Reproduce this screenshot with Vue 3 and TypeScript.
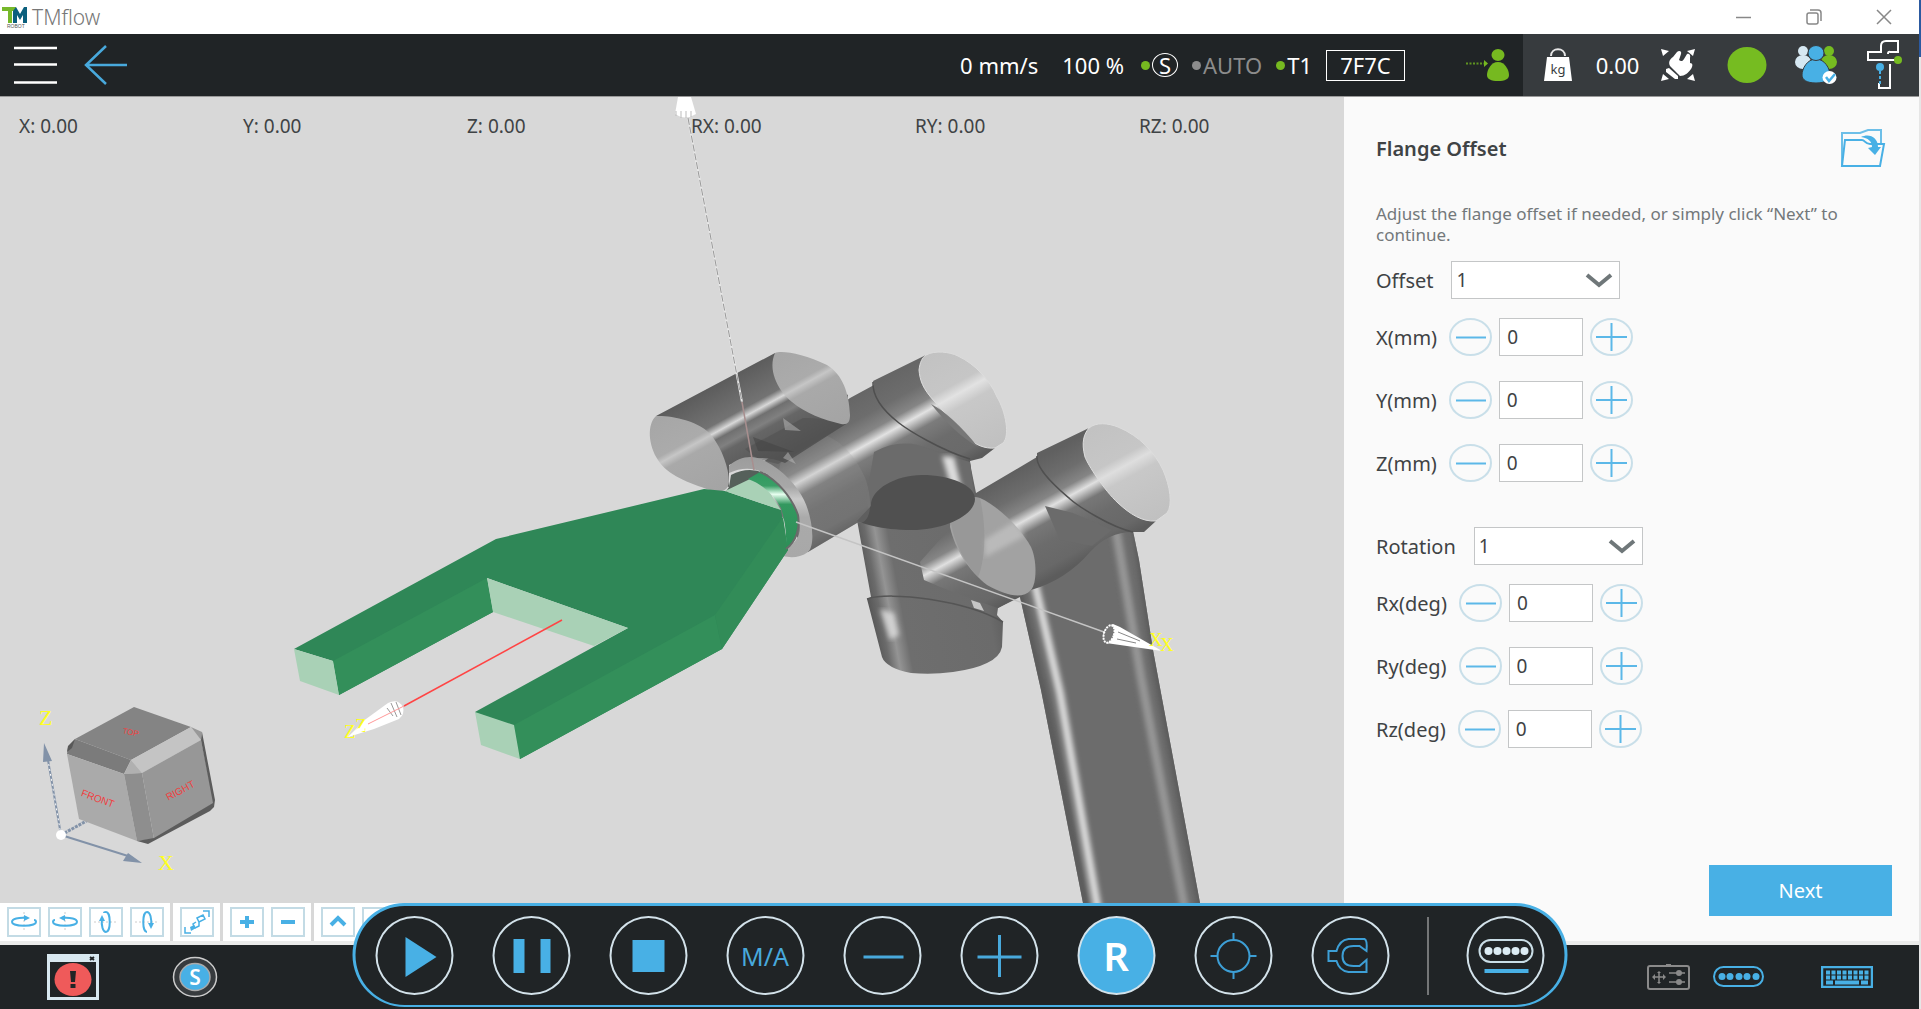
<script setup lang="ts">
import { reactive, ref } from 'vue'

interface Axis {
  id: string
  label: string
  value: string
}

const pose = ['X: 0.00', 'Y: 0.00', 'Z: 0.00', 'RX: 0.00', 'RY: 0.00', 'RZ: 0.00']

const offsetStep = ref('1')
const rotationStep = ref('1')

const offsets = reactive<Axis[]>([
  { id: 'x', label: 'X(mm)', value: '0' },
  { id: 'y', label: 'Y(mm)', value: '0' },
  { id: 'z', label: 'Z(mm)', value: '0' },
])

const rotations = reactive<Axis[]>([
  { id: 'rx', label: 'Rx(deg)', value: '0' },
  { id: 'ry', label: 'Ry(deg)', value: '0' },
  { id: 'rz', label: 'Rz(deg)', value: '0' },
])

function step(axis: Axis, amount: number) {
  axis.value = String(Number(axis.value) + amount)
}
</script>

<template>
  <div class="desktop">
    <div class="app">
      <header class="titlebar">
        <svg class="logo" width="26" height="22" viewBox="0 0 26 22" aria-hidden="true">
          <path d="M0 1h14v4h-4v12H6V5H0z" fill="#76b82a" />
          <path d="M11 17V5l3-4 4 7 4-7h3v16h-4V9l-3 5-3-5v8z" fill="#0b5f7d" />
          <text x="5" y="22" class="logo-sub">ROBOT</text>
        </svg>
        <span class="title">TMflow</span>
        <div class="window-buttons">
          <button type="button" aria-label="Minimize">
            <svg width="16" height="16" viewBox="0 0 16 16"><path d="M0 8.500h15" /></svg>
          </button>
          <button type="button" aria-label="Restore">
            <svg width="16" height="16" viewBox="0 0 16 16"><rect x="1" y="4" width="11" height="11" rx="2" /><path d="M4 1h8a3 3 0 0 1 3 3v8" /></svg>
          </button>
          <button type="button" aria-label="Close">
            <svg width="16" height="16" viewBox="0 0 16 16"><path d="M1 1l14 14M15 1L1 15" /></svg>
          </button>
        </div>
      </header>

      <nav class="topbar">
        <button type="button" class="plain menu" aria-label="Menu">
          <svg width="44" height="40" viewBox="0 0 44 40"><path d="M0 3h43M0 19.500h43M0 37.500h43" stroke="#fff" stroke-width="2.500" /></svg>
        </button>
        <button type="button" class="plain back" aria-label="Back">
          <svg width="44" height="42" viewBox="0 0 44 42"><path d="M43 21H2M22 2L2 21l20 19" fill="none" stroke="#48a9dc" stroke-width="2.500" /></svg>
        </button>
        <div class="status">
          <span class="speed">0 mm/s</span>
          <span class="percent">100 %</span>
          <span class="flag"><i class="dot on"></i><span class="ring-s">S</span></span>
          <span class="flag off"><i class="dot"></i>AUTO</span>
          <span class="flag"><i class="dot on"></i>T1</span>
          <span class="code">7F7C</span>
        </div>
        <svg class="person" width="44" height="34" viewBox="0 0 44 34">
          <path d="M0 15.500h18" stroke="#5f9420" stroke-width="2" stroke-dasharray="2 1.500" />
          <path d="M18 12l4 3.500-4 3.500z" fill="#76b920" />
          <ellipse cx="32" cy="7" rx="6.500" ry="6" fill="#76b920" />
          <path d="M32 14c7 0 11 8 11 13 0 4-4 6-11 6s-11-2-11-6c0-5 4-13 11-13z" fill="#76b920" />
        </svg>
        <div class="tray">
          <span class="cell kg">
            <svg width="30" height="36" viewBox="0 0 30 36">
              <path d="M8 9c0-9 14-9 14 0" fill="none" stroke="#e8e8e8" stroke-width="2" />
              <path d="M4 10h22l3 24H1z" fill="#fff" />
              <text x="15" y="27" text-anchor="middle" class="kg-text">kg</text>
            </svg>
          </span>
          <span class="cell payload">0.00</span>
          <span class="cell">
            <svg width="36" height="34" viewBox="0 0 36 34">
              <path d="M1 1l8 2-6 5zM35 1l-8 2 6 5zM1 33l8-2-6-5zM35 33l-8-2 6-5z" fill="#fff" />
              <path d="M6 21l3-1 9 8 0 3-3 0-9-7z" fill="#fff" />
              <path d="M10 18C8 14 10 11 13 9l4-5c2-2 5-1 4 2l-2 6c2 2 4 1 5-1l3-5c2-1 4 1 3 4l0 5c3 0 3 3 1 6-3 4-6 7-11 7z" fill="#fff" />
            </svg>
          </span>
          <span class="cell">
            <svg width="40" height="36" viewBox="0 0 40 36"><ellipse cx="20" cy="18" rx="19.500" ry="18" fill="#76bc21" /></svg>
          </span>
          <span class="cell">
            <svg width="42" height="40" viewBox="0 0 42 40">
              <ellipse cx="8" cy="6" rx="5" ry="5" fill="#d6e8f2" /><ellipse cx="8" cy="17" rx="8" ry="7" fill="#d6e8f2" />
              <ellipse cx="34" cy="6" rx="5" ry="5" fill="#76bc21" /><ellipse cx="34" cy="17" rx="8" ry="7" fill="#76bc21" />
              <path d="M21 14c9 0 14 10 14 16 0 5-5 8-14 8S7 35 7 30c0-6 5-16 14-16z" fill="#48b0e5" stroke="#373b3e" stroke-width="1" />
              <ellipse cx="21" cy="8" rx="8" ry="7.500" fill="#48b0e5" stroke="#373b3e" stroke-width="1" />
              <ellipse cx="34.500" cy="32.500" rx="7" ry="6.500" fill="#fff" />
              <path d="M31 32l3 4 6-7" fill="none" stroke="#48b0e5" stroke-width="2.500" />
            </svg>
          </span>
          <span class="cell">
            <svg width="36" height="50" viewBox="0 0 36 50">
              <path d="M28 20H1v-8h13V6c0-3 2-5 5-5h12v11h-6c-3 0-4-1-4 2" fill="none" stroke="#fff" stroke-width="2" />
              <path d="M23 24v24H12v-5" fill="none" stroke="#fff" stroke-width="2" />
              <path d="M13 31v13" stroke="#48b0e5" stroke-width="2" stroke-dasharray="3 2" />
              <circle cx="13" cy="27" r="4" fill="#48b0e5" /><circle cx="31" cy="20" r="4" fill="#76bc21" />
            </svg>
          </span>
        </div>
      </nav>

      <main class="workspace">
        <section class="viewer">
          <div class="canvas">
            <svg class="scene" viewBox="0 97 1344 806" preserveAspectRatio="xMinYMin slice" aria-label="Robot arm view">
              <defs>
                <linearGradient id="gB" gradientUnits="userSpaceOnUse" x1="850" y1="398" x2="905" y2="497">
                  <stop offset="0" stop-color="#666" /><stop offset=".2" stop-color="#6d6d6d" /><stop offset=".34" stop-color="#858585" /><stop offset=".43" stop-color="#e2e2e2" /><stop offset=".54" stop-color="#7c7c7c" /><stop offset=".7" stop-color="#6c6c6c" /><stop offset=".9" stop-color="#6a6a6a" /><stop offset="1" stop-color="#5a5a5a" />
                </linearGradient>
                <linearGradient id="gD" gradientUnits="userSpaceOnUse" x1="976" y1="493" x2="1029" y2="590">
                  <stop offset="0" stop-color="#606060" /><stop offset=".2" stop-color="#6d6d6d" /><stop offset=".34" stop-color="#858585" /><stop offset=".43" stop-color="#e0e0e0" /><stop offset=".54" stop-color="#777" /><stop offset=".7" stop-color="#6c6c6c" /><stop offset=".9" stop-color="#686868" /><stop offset="1" stop-color="#5c5c5c" />
                </linearGradient>
                <linearGradient id="gA" gradientUnits="userSpaceOnUse" x1="658" y1="416" x2="704" y2="500">
                  <stop offset="0" stop-color="#5c5c5c" /><stop offset=".36" stop-color="#737373" /><stop offset=".44" stop-color="#d8d8d8" /><stop offset=".51" stop-color="#707070" /><stop offset=".6" stop-color="#808080" /><stop offset=".66" stop-color="#666" /><stop offset="1" stop-color="#555" />
                </linearGradient>
                <linearGradient id="gCapA" gradientUnits="userSpaceOnUse" x1="658" y1="416" x2="704" y2="500">
                  <stop offset="0" stop-color="#a6a6a6" /><stop offset=".38" stop-color="#ababab" /><stop offset=".44" stop-color="#c6c6c6" /><stop offset=".52" stop-color="#a9a9a9" /><stop offset="1" stop-color="#a4a4a4" />
                </linearGradient>
                <linearGradient id="gCapB" gradientUnits="userSpaceOnUse" x1="850" y1="398" x2="905" y2="497">
                  <stop offset="0" stop-color="#c2c2c2" /><stop offset=".34" stop-color="#c6c6c6" /><stop offset=".43" stop-color="#e2e2e2" /><stop offset=".54" stop-color="#c8c8c8" /><stop offset="1" stop-color="#c0c0c0" />
                </linearGradient>
                <linearGradient id="gCapD" gradientUnits="userSpaceOnUse" x1="976" y1="493" x2="1029" y2="590">
                  <stop offset="0" stop-color="#c2c2c2" /><stop offset=".34" stop-color="#c6c6c6" /><stop offset=".43" stop-color="#dedede" /><stop offset=".54" stop-color="#c8c8c8" /><stop offset="1" stop-color="#c0c0c0" />
                </linearGradient>
                <linearGradient id="gC" gradientUnits="userSpaceOnUse" x1="862" y1="575" x2="998" y2="550">
                  <stop offset="0" stop-color="#555" /><stop offset=".08" stop-color="#6b6b6b" /><stop offset=".15" stop-color="#949494" /><stop offset=".24" stop-color="#6e6e6e" /><stop offset=".85" stop-color="#6b6b6b" /><stop offset="1" stop-color="#5a5a5a" />
                </linearGradient>
                <linearGradient id="gRing" x1="0" y1="0" x2="0" y2="1">
                  <stop offset="0" stop-color="#9c9c9c" /><stop offset=".3" stop-color="#a8a8a8" /><stop offset=".42" stop-color="#cacaca" /><stop offset=".6" stop-color="#aaa" /><stop offset="1" stop-color="#a8a8a8" />
                </linearGradient>
                <linearGradient id="gDisc" x1="0" y1="0" x2="0" y2="1">
                  <stop offset="0" stop-color="#2f9a5f" /><stop offset=".18" stop-color="#3a9e66" /><stop offset=".29" stop-color="#e8fff0" /><stop offset=".42" stop-color="#33985f" /><stop offset="1" stop-color="#2d8f58" />
                </linearGradient>
                <filter id="soft" x="-50%" y="-5%" width="200%" height="110%"><feGaussianBlur stdDeviation="2.500" /></filter>
                <clipPath id="colClip"><path d="M1020 597L1041 690 1083 903H1200L1153 650 1139 560 1133 531 1030 540z" /></clipPath>
              </defs>

              <!-- lower column -->
              <path d="M1020 597L1041 690 1083 903H1200L1153 650 1139 560 1133 531 1080 500 1025 570z" fill="#6c6c6c" />
              <g clip-path="url(#colClip)" fill="none" filter="url(#soft)">
                <path d="M1016 580L1046 705 1086 910" stroke="#5b5b5b" stroke-width="9" />
                <path d="M1034 580L1060 693 1098 910" stroke="#dadada" stroke-width="8" />
                <path d="M1116 530L1141 677 1185 910" stroke="#969696" stroke-width="9" />
                <path d="M1136 530L1155 660 1202 910" stroke="#5c5c5c" stroke-width="8" />
              </g>

              <!-- middle vertical link -->
              <path d="M857 520L871 597 867 599 882 657Q886 668 911 673 932 675 953 672 975 669 987 663 1000 657 1002 647L1003 622 997 615 998 608 1020 597 1033 570 976 493 970 463 880 440z" fill="url(#gC)" />
              <path d="M867 599C890 591 965 600 1003 622" fill="none" stroke="#555" stroke-width="1.500" />
              <path d="M880 609l14 4 5 22-9 5z" fill="#dcdcdc" opacity=".85" filter="url(#soft)" />

              <!-- forearm joint -->
              <path d="M976 493L1037 457 1037 453 1089 428 1140 440 1156 521 1144 532 1133 532Q1108 532 1090 552 1066 580 1031 590L998 608Q955 594 924 580L920 562 951 527z" fill="url(#gD)" />
              <path d="M971 600l9 3 4 8-10-3z" fill="#ddd" opacity=".8" />
              <path d="M1045 506L1073 513 1112 530 1092 546 1060 540z" fill="#6b6b6b" />
              <path d="M1037 456C1035 470 1062 492 1070 499S1110 527 1133 532" fill="none" stroke="#505050" stroke-width="1.500" />
              <path d="M1089 428C1096 422 1108 423 1118 427 1140 436 1155 453 1163 470 1170 486 1173 505 1167 513L1156 521C1142 522 1130 514 1118 503 1104 490 1088 465 1085 457 1081 442 1084 434 1089 428z" fill="url(#gCapD)" stroke="#ddd" stroke-width="1" />
              <path d="M951 510C958 498 970 495 980 498 1000 507 1022 530 1031 547 1037 560 1037 583 1031 590 1022 600 1005 595 987 585 970 572 955 550 950 527z" fill="#a2a2a2" />
              <path d="M984 540L1015 521 1025 536 985 557z" fill="#d8d8d8" opacity=".45" filter="url(#soft)" />
              <path d="M951 510C958 498 970 495 980 498 987 530 985 560 978 577 962 560 948 530 951 510z" fill="#8d8d8d" opacity=".5" />

              <!-- wrist joint -->
              <path d="M762 463L850 398 874 385 873 381 926 355 955 365 1000 440 995 448 982 458 970 461 973 490 920 510Q885 515 857 523L808 552 770 500z" fill="url(#gB)" />
              <path d="M866 500L874 452Q896 440 918 445L950 456 970 462 974 493 925 510 870 515z" fill="#6b6b6b" />
              <path d="M942 456l12 1 9 37-9 4z" fill="#ddd" filter="url(#soft)" />
              <path d="M871 506C870 490 895 475 922 475 950 475 975 485 975 499 975 515 945 530 912 530 880 530 862 523 857 521z" fill="#505050" />
              <path d="M785 440C815 420 850 440 866 480 875 510 868 525 857 523L808 552 775 490z" fill="#999" opacity=".2" />
              <path d="M873 382C872 400 890 416 899 423S940 450 970 459" fill="none" stroke="#4f4f4f" stroke-width="1.500" />
              <path d="M926 355C935 350 950 352 958 356 975 364 990 380 997 397 1006 412 1010 436 1003 443L995 448C985 449 975 445 965 436L935 402C922 388 920 380 919 370 920 362 922 358 926 355z" fill="url(#gCapB)" stroke="#ddd" stroke-width="1" />
              <path d="M931 404Q952 415 978 447 955 434 931 404z" fill="#777" />

              <!-- side cylinder -->
              <path d="M656 416L775 353 848 395 846 424 785 463Q760 452 729 465V487L690 470z" fill="url(#gA)" />
              <path d="M846 424Q822 417 803 418L745 449 758 459 778 464z" fill="#505050" opacity=".55" />
              <path d="M783 418L801 431 785 430zM788 452L796 464 783 458z" fill="#bbb" opacity=".5" />
              <path d="M753 437L794 452 758 451z" fill="#444" opacity=".55" />
              <path d="M775 353C782 350 804 354 827 365 843 375 849 393 850 415 850 423 847 425 841 424 824 420 805 413 792 402 776 389 768 368 775 353z" fill="url(#gCapA)" />
              <path d="M656 416C668 415 700 420 712 436 722 449 729 468 729 482 728 491 722 493 710 490 689 483 667 475 658 460 648 445 647 424 656 416z" fill="url(#gCapA)" />

              <!-- flange -->
              <path d="M729 473V466C740 455 755 455 765 461 783 470 798 487 804 500 812 516 816 545 808 552 800 558 790 558 783 556L786 549C800 540 802 530 798 517 793 500 780 484 768 475 755 467 742 467 729 473z" fill="url(#gRing)" />
              <path d="M729 487L731 475Q750 465 768 475L750 481 725 493z" fill="#55605a" />

              <!-- gripper -->
              <path d="M294 649L496 539 704 489 725 491 781 510 788 550 722 649 520 759 475 712 628 628 487 578 493 612 339 695 333 661z" fill="#2f8757" />
              <path d="M333 661L487 578 493 612 339 695zM514 725L715 615 722 649 520 759z" fill="#338f5a" />
              <path d="M715 615L783 517 788 550 722 649z" fill="#328c58" />
              <path d="M294 649L333 661 339 695 300 681zM475 712L514 725 520 759 481 745zM487 578L628 628 594 646 493 612zM725 491L750 479 768 490 781 510z" fill="#a9d1b6" />
              <path d="M760 472C778 480 792 498 798 515 800 527 797 541 786 549 787 535 785 520 781 508 773 494 762 484 748 479z" fill="url(#gDisc)" />
              <path d="M760 472C778 480 792 498 798 515 800 527 797 541 786 549" fill="none" stroke="#6a6a6a" stroke-width="2" />

              <!-- axes -->
              <path d="M688 118L742 402" stroke="#e8e8e8" stroke-width="2" />
              <path d="M688 118L742 402" stroke="#999" stroke-width="1" stroke-dasharray="7 2" />
              <path d="M742 402L754 470" stroke="#a88f8f" stroke-width="1.500" />
              <path d="M678 97L675 114Q685 121 696 114L691 97z" fill="#fff" />
              <path d="M676 111v5M681 111v7M686 111v7M691 111v6" stroke="#bbb" stroke-width="1" />
              <path d="M796 522L1104 632" stroke="#c4c4c4" stroke-width="1.500" />
              <path d="M1162 651L1106 643Q1098 630 1113 624L1120 627z" fill="#fff" />
              <ellipse cx="1109" cy="634" rx="5" ry="9" transform="rotate(18 1109 634)" fill="#777" stroke="#fff" stroke-width="2" stroke-dasharray="2 1" />
              <path d="M1118 632L1140 641M1117 639L1136 643" stroke="#888" stroke-width="1" />
              <text x="1149" y="646" class="axis small">X</text>
              <text x="1160" y="651" class="axis small">X</text>
              <path d="M562 620L404 706" stroke="#f44" stroke-width="1.500" />
              <path d="M348 737L366 719 388 703Q398 698 403 707 405 714 399 719L374 729z" fill="#fff" />
              <path d="M391 703l6 14M396 702l5 13M387 708l6 8" stroke="#999" stroke-width="1" />
              <path d="M404 706L368 724" stroke="#f99" stroke-width="1" />
              <text x="344" y="738" class="axis small">Z</text>
              <text x="355" y="732" class="axis small">Z</text>
              <path d="M348 737L358 728 366 730z" fill="#fff" />

              <!-- orientation cube -->
              <path d="M61 835L90 819" stroke="#8292a8" stroke-width="3" stroke-dasharray="3 1" />
              <path d="M75 739L134 707 191 727 131 760z" fill="#848484" />
              <path d="M75 739L131 760 124 774 67 754 68 747z" fill="#7b7b7b" />
              <path d="M67 752L68 746 75 739 72 748z" fill="#595959" />
              <path d="M191 727L201 740 142 773 131 760z" fill="#c4c4c4" />
              <path d="M191 727L202 732 201 740z" fill="#999" />
              <path d="M131 760L142 773 124 774z" fill="#b0b0b0" />
              <path d="M67 754L124 774 137 841 79 819z" fill="#aaa" />
              <path d="M124 774L142 773 154 839 137 841z" fill="#8e8e8e" />
              <path d="M142 773L201 740 214 803 154 839z" fill="#979797" />
              <path d="M202 732L215 800 214 807 210 811 148 844 137 841 154 838 213 803 201 740z" fill="#5c5c5c" />
              <text x="131" y="735" text-anchor="middle" transform="rotate(12 131 731)" class="face tiny">TOP</text>
              <text x="98" y="802" text-anchor="middle" transform="rotate(20 98 798)" class="face">FRONT</text>
              <text x="180" y="794" text-anchor="middle" transform="rotate(-28 180 790)" class="face">RIGHT</text>
              <path d="M61 835L48 760M61 835L128 856" stroke="#8292a8" stroke-width="2" />
              <path d="M61 835L48 760" stroke="#fff" stroke-width="1" stroke-dasharray="2 3" />
              <path d="M44 743L43 762 52 761zM142 863L123 861 128 853z" fill="#8292a8" />
              <circle cx="61" cy="835" r="5" fill="#fff" />
              <text x="39" y="725" class="axis">Z</text>
              <text x="158" y="870" class="axis">X</text>
            </svg>
            <div class="pose"><span v-for="p in pose" :key="p">{{ p }}</span></div>
          </div>
          <div class="tools">
            <div class="tool-group">
              <button type="button" aria-label="Rotate right"><svg viewBox="0 0 28 24"><path d="M14 2v20" class="guide" /><path d="M18 8C8 7 2 9 2 12c0 5 24 5 24 0 0-1-1-2-2-2" /><path d="M14 5l6 3-6 3z" class="solid" /></svg></button>
              <button type="button" aria-label="Rotate left"><svg viewBox="0 0 28 24"><path d="M14 2v20" class="guide" /><path d="M10 8c10-1 16 1 16 4 0 5-24 5-24 0 0-1 1-2 2-2" /><path d="M14 5L8 8l6 3z" class="solid" /></svg></button>
              <button type="button" aria-label="Rotate up"><svg viewBox="0 0 28 24"><path d="M2 12h24" class="guide" /><path d="M10 8c-1 8 1 14 4 14 5 0 5-20 0-20-1 0-2 0-2 1" /><path d="M7 11l3-6 3 6z" class="solid" /></svg></button>
              <button type="button" aria-label="Rotate down"><svg viewBox="0 0 28 24"><path d="M2 12h24" class="guide" /><path d="M18 16c1-8-1-14-4-14-5 0-5 20 0 20" /><path d="M15 13l3 6 3-6z" class="solid" /></svg></button>
            </div>
            <div class="tool-group">
              <button type="button" aria-label="Fit view"><svg viewBox="0 0 28 24"><path d="M20 1h6v6M8 23H2v-6" class="corner" /><path d="M14 8l6-3 2 4-6 3zM13 12l-3 2 2 4 4-2 0-4" class="corner" /><path d="M7 17l4-2 2 3-5 3z" class="solid" /></svg></button>
            </div>
            <div class="tool-group">
              <button type="button" aria-label="Zoom in"><svg viewBox="0 0 28 24"><path d="M7 12h14M14 6v12" class="thick" /></svg></button>
              <button type="button" aria-label="Zoom out"><svg viewBox="0 0 28 24"><path d="M7 12h14" class="thick" /></svg></button>
            </div>
            <div class="tool-group last">
              <button type="button" aria-label="Move up"><svg viewBox="0 0 28 24"><path d="M7 15l7-7 7 7" class="thick" /></svg></button>
              <button type="button" aria-label="Move down"><svg viewBox="0 0 28 24"><path d="M7 9l7 7 7-7" class="thick" /></svg></button>
            </div>
          </div>
        </section>

        <aside class="panel">
          <div class="panel-head">
            <h1>Flange Offset</h1>
            <button type="button" class="plain folder" aria-label="Open">
              <svg width="46" height="40" viewBox="0 0 46 40">
                <path d="M41 16V2H28l-8 3H2v33" fill="none" stroke="#6dbfe8" stroke-width="2" />
                <path d="M2 38l3-26h17c3 0 3 4 8 4h14l-4 22z" fill="none" stroke="#48b0e5" stroke-width="2" />
                <path d="M21 9c8-4 17 0 17 10l3 0-6 8-7-7 4-1c0-6-4-9-11-10z" fill="#48b0e5" />
              </svg>
            </button>
          </div>
          <p class="hint">Adjust the flange offset if needed, or simply click “Next” to continue.</p>

          <form class="form" @submit.prevent>
            <div class="group">
              <div class="row">
                <label for="offset" class="wide">Offset</label>
                <span class="select">
                  <select id="offset" v-model="offsetStep"><option>1</option><option>5</option><option>10</option></select>
                  <svg width="28" height="16" viewBox="0 0 28 16"><path d="M2 3l12 10L26 3" /></svg>
                </span>
              </div>
              <div v-for="a in offsets" :key="a.id" class="row stepper">
                <label :for="a.id">{{ a.label }}</label>
                <button type="button" class="plain" :aria-label="'Decrease ' + a.label" @click="step(a, -Number(offsetStep))">
                  <svg width="43" height="38" viewBox="0 0 43 38"><ellipse cx="21.500" cy="19" rx="20.500" ry="18" /><path d="M7 19.500h30" /></svg>
                </button>
                <input :id="a.id" v-model="a.value" type="text" />
                <button type="button" class="plain" :aria-label="'Increase ' + a.label" @click="step(a, Number(offsetStep))">
                  <svg width="43" height="38" viewBox="0 0 43 38"><ellipse cx="21.500" cy="19" rx="20.500" ry="18" /><path d="M6 19h31M21.500 5v28" /></svg>
                </button>
              </div>
            </div>
            <div class="group">
              <div class="row">
                <label for="rotation" class="wide">Rotation</label>
                <span class="select">
                  <select id="rotation" v-model="rotationStep"><option>1</option><option>5</option><option>10</option></select>
                  <svg width="28" height="16" viewBox="0 0 28 16"><path d="M2 3l12 10L26 3" /></svg>
                </span>
              </div>
              <div v-for="a in rotations" :key="a.id" class="row stepper">
                <label :for="a.id">{{ a.label }}</label>
                <button type="button" class="plain" :aria-label="'Decrease ' + a.label" @click="step(a, -Number(rotationStep))">
                  <svg width="43" height="38" viewBox="0 0 43 38"><ellipse cx="21.500" cy="19" rx="20.500" ry="18" /><path d="M7 19.500h30" /></svg>
                </button>
                <input :id="a.id" v-model="a.value" type="text" />
                <button type="button" class="plain" :aria-label="'Increase ' + a.label" @click="step(a, Number(rotationStep))">
                  <svg width="43" height="38" viewBox="0 0 43 38"><ellipse cx="21.500" cy="19" rx="20.500" ry="18" /><path d="M6 19h31M21.500 5v28" /></svg>
                </button>
              </div>
            </div>
          </form>
          <button type="button" class="next">Next</button>
        </aside>
      </main>

      <footer class="footer">
        <button type="button" class="plain" aria-label="Errors">
          <svg width="52" height="46" viewBox="0 0 52 46">
            <rect x="1.500" y="1.500" width="49" height="43" fill="#202426" stroke="#d8e8f0" stroke-width="3" />
            <path d="M0 0h52v8H0z" fill="#d8e8f0" /><path d="M43 3l4 3M47 3l-4 3" stroke="#202426" stroke-width="2" />
            <ellipse cx="26" cy="25.500" rx="18.500" ry="16.500" fill="#ef5a5a" />
            <path d="M23 17h6l-1 11h-4zM23.500 30h5v4h-5z" fill="#202426" />
          </svg>
        </button>
        <button type="button" class="plain safety" aria-label="Safety">
          <svg width="46" height="42" viewBox="0 0 46 42">
            <ellipse cx="23" cy="21" rx="21.500" ry="19.500" fill="#373b3e" stroke="#ccc" stroke-width="1.500" />
            <ellipse cx="23" cy="21" rx="15" ry="13.500" fill="#48b0e5" stroke="#aaa" stroke-width="1.500" />
            <text x="23" y="29" text-anchor="middle" class="safety-text">S</text>
          </svg>
        </button>
        <div class="footer-right">
          <svg width="44" height="26" viewBox="0 0 44 26" fill="none" stroke="#8a8a8a" stroke-width="2">
            <rect x="1" y="2" width="41" height="23" rx="2" /><path d="M19 1h5" stroke-width="3" />
            <path d="M22 9h16M22 18h16M6 13h12M12 8v11" stroke-width="1.500" /><circle cx="32" cy="9" r="2" fill="#8a8a8a" /><circle cx="32" cy="18" r="2" fill="#8a8a8a" />
            <path d="M5 13l3-3v6zM19 13l-3-3v6zM12 7l-2 2h4zM12 20l-2-2h4z" fill="#8a8a8a" stroke="none" />
          </svg>
          <svg class="dots" width="52" height="22" viewBox="0 0 52 22">
            <rect x="1" y="1" width="49" height="19" rx="9.500" fill="none" stroke="#48b0e5" stroke-width="2" />
            <g fill="#48b0e5"><circle cx="9" cy="10.500" r="3.500" /><circle cx="17" cy="10.500" r="3.500" /><circle cx="26" cy="10.500" r="3.500" /><circle cx="34" cy="10.500" r="3.500" /><circle cx="43" cy="10.500" r="3.500" /></g>
          </svg>
          <svg width="52" height="22" viewBox="0 0 52 22">
            <rect x="1" y="1" width="50" height="20" fill="#202426" stroke="#48b0e5" stroke-width="2.500" />
            <path d="M5 6.500h43M5 11.500h43" stroke="#48b0e5" stroke-width="4" stroke-dasharray="4 1.500" />
            <path d="M5 16.500h7M14 16.500h24M40 16.500h7" stroke="#48b0e5" stroke-width="4" />
          </svg>
        </div>
      </footer>

      <div class="remote">
        <button type="button" aria-label="Play"><svg viewBox="0 0 78 78"><path d="M30 20l31 20-31 20z" class="fill" /></svg></button>
        <button type="button" aria-label="Pause"><svg viewBox="0 0 78 78"><path d="M21 22h11v34H21zM48 22h10v34H48z" class="fill" /></svg></button>
        <button type="button" aria-label="Stop"><svg viewBox="0 0 78 78"><path d="M23 23h32v32H23z" class="fill" /></svg></button>
        <button type="button">M/A</button>
        <button type="button" aria-label="Slower"><svg viewBox="0 0 78 78"><path d="M20 40h40" class="line" /></svg></button>
        <button type="button" aria-label="Faster"><svg viewBox="0 0 78 78"><path d="M17 40h44M39 18v42" class="line" /></svg></button>
        <button type="button" class="active">R</button>
        <button type="button" aria-label="Target"><svg viewBox="0 0 78 78"><circle cx="39" cy="39" r="16" class="thin" /><path d="M39 16v7M39 55v7M16 39h7M55 39h7" class="thin" /></svg></button>
        <button type="button" aria-label="Gripper"><svg viewBox="0 0 78 78"><path d="M17 34h8Q28 23 37 22H53q3 1 2 12L48 29H42Q31 29 31 39 31 49 42 49H48L55 43v12H37Q28 54 25 44H17z" class="thin" /></svg></button>
        <i class="divider"></i>
        <button type="button" aria-label="Hide stick"><svg viewBox="0 0 78 78"><rect x="13" y="23" width="53" height="22" rx="11" fill="none" stroke="#c9dde6" stroke-width="2" /><g fill="#dcecf4"><circle cx="22" cy="34" r="4" /><circle cx="31" cy="34" r="4" /><circle cx="40" cy="34" r="4" /><circle cx="49" cy="34" r="4" /><circle cx="58" cy="34" r="4" /></g><path d="M18 54h44" class="bar" /></svg></button>
      </div>
    </div>
    <div class="edge"></div>
  </div>
</template>

<style>
body {
  margin: 0;
}
</style>

<style scoped>
.desktop {
  display: flex;
  min-height: 100vh;
  font-family: "Noto Sans", "Open Sans", sans-serif;
  color: #3f4345;
}
.app {
  position: relative;
  flex: 1;
  min-width: 0;
  display: grid;
  grid-template-rows: 34px 63px 1fr 68px;
}
.edge {
  width: 2px;
  background: linear-gradient(#2c5aa0 57px, #e6e6e6 57px);
}
button,
input,
select {
  font-family: inherit;
  color: inherit;
  box-sizing: border-box;
}
button {
  padding: 0;
  cursor: pointer;
}
svg {
  display: block;
}
.plain {
  border: 0;
  background: none;
}

.titlebar {
  display: flex;
  align-items: center;
  background: #fff;
}
.logo {
  margin: 0 4px 0 2px;
}
.logo-sub {
  font: 5px "Liberation Sans", sans-serif;
  fill: #555;
}
.title {
  font-size: 21px;
  font-weight: 300;
  color: #777;
}
.window-buttons {
  display: flex;
  margin-left: auto;
}
.window-buttons button {
  display: grid;
  place-items: center;
  width: 70px;
  height: 34px;
  border: 0;
  background: none;
}
.window-buttons svg {
  fill: none;
  stroke: #888;
  stroke-width: 1.5;
}

.topbar {
  display: flex;
  align-items: center;
  box-sizing: border-box;
  border-bottom: 1px solid #999;
  background: #202426;
  color: #fff;
  font-size: 22px;
}
.menu {
  margin-left: 14px;
}
.back {
  margin-left: 26px;
}
.status {
  display: flex;
  align-items: center;
  gap: 14px;
  margin-left: auto;
  white-space: nowrap;
}
.speed {
  margin-right: 10px;
}
.percent {
  margin-right: 3px;
}
.flag {
  display: flex;
  align-items: center;
  gap: 2px;
}
.off {
  color: #8c8c8c;
}
.dot {
  width: 9px;
  height: 9px;
  border-radius: 50%;
  background: #8c8c8c;
}
.dot.on {
  background: #76b920;
}
.ring-s {
  box-sizing: border-box;
  width: 26px;
  height: 24px;
  border: 1px solid #fff;
  border-radius: 50%;
  line-height: 22px;
  text-align: center;
}
.code {
  box-sizing: border-box;
  width: 79px;
  height: 31px;
  border: 1px solid #fff;
  line-height: 29px;
  text-align: center;
}
.person {
  margin: 0 13px 0 61px;
}
.tray {
  display: flex;
  align-self: stretch;
  background: #373b3e;
}
.cell {
  display: grid;
  place-items: center;
  width: 69px;
}
.payload {
  width: 51px;
}
.kg-text {
  font: 13px "Noto Sans", sans-serif;
  fill: #373b3e;
}

.workspace {
  display: grid;
  grid-template-columns: 1fr 575px;
}
.viewer {
  display: flex;
  flex-direction: column;
  min-width: 0;
  background: #d8d8d8;
}
.canvas {
  position: relative;
  flex: 1;
  overflow: hidden;
}
.scene {
  position: absolute;
  inset: 0;
  width: 100%;
  height: 100%;
}
.axis {
  font: 22px "Liberation Serif", serif;
  fill: #ffff1e;
}
.axis.small {
  font-size: 19px;
}
.face {
  font: 10px "Liberation Sans", sans-serif;
  fill: #f04040;
}
.face.tiny {
  font-size: 8px;
}
.pose {
  position: relative;
  display: grid;
  grid-template-columns: repeat(6, 1fr);
  padding-top: 16px;
  font-size: 19px;
  line-height: 26px;
}
.pose span {
  padding-left: 19px;
}
.tools {
  display: flex;
  gap: 3px;
  height: 38px;
}
.tool-group {
  display: flex;
  align-items: center;
  gap: 7px;
  padding: 0 6px 0 7px;
  background: #fff;
}
.tool-group button {
  width: 34px;
  height: 30px;
  border: 2px solid #c3dbe5;
  background: #fff;
}
.tool-group svg {
  width: 28px;
  height: 24px;
  margin: 1px;
  fill: none;
  stroke: #48b0e5;
  stroke-width: 2;
}
.tool-group .solid {
  fill: #48b0e5;
  stroke: none;
}
.tool-group .corner {
  stroke-width: 1.5;
}
.tool-group .guide {
  stroke: #ccc;
  stroke-width: 1;
  stroke-dasharray: 2 2;
}
.tool-group .thick {
  stroke-width: 4;
}

.panel {
  display: flex;
  flex-direction: column;
  padding: 32px 27px 25px 32px;
  background: #fafafa;
}
.panel-head {
  display: flex;
  align-items: center;
  justify-content: space-between;
  height: 38px;
  padding-right: 6px;
}
h1 {
  margin: 0;
  font-size: 20px;
  font-weight: 600;
}
.hint {
  margin: 36px 0 16px;
  font-size: 17px;
  line-height: 21px;
  color: #73787a;
}
.form {
  display: flex;
  flex-direction: column;
  gap: 45px;
  font-size: 20px;
}
.row {
  display: flex;
  align-items: center;
  height: 38px;
}
.row + .row {
  margin-top: 19px;
}
.stepper + .stepper {
  margin-top: 25px;
}
label {
  margin-right: 12px;
}
.wide {
  margin-right: 18px;
}
.select {
  position: relative;
}
.select select {
  display: block;
  width: 169px;
  height: 38px;
  padding: 0 4px;
  border: 1px solid #c4c6c7;
  border-radius: 0;
  background: #fff;
  appearance: none;
  font-size: 19px;
}
.select svg {
  position: absolute;
  top: 11px;
  right: 7px;
  fill: none;
  stroke: #6f7779;
  stroke-width: 4;
  pointer-events: none;
}
.stepper input {
  width: 84px;
  height: 38px;
  margin: 0 7px;
  padding: 0 7px;
  border: 1px solid #c4c6c7;
  background: #fff;
  font-size: 19px;
}
.stepper ellipse {
  fill: none;
  stroke: #c9dfe9;
  stroke-width: 2;
}
.stepper path {
  stroke: #5cb8e8;
  stroke-width: 2;
}
.next {
  width: 183px;
  height: 51px;
  margin-top: auto;
  align-self: flex-end;
  border: 0;
  background: #48b0e5;
  color: #fff;
  font-size: 20px;
}

.footer {
  display: flex;
  align-items: center;
  padding: 0 46px 0 47px;
  border-top: 4px solid #eaebea;
  background: #202426;
}
.safety {
  margin-left: 73px;
}
.safety-text {
  font: 600 21px "Noto Sans", sans-serif;
  fill: #fff;
}
.footer-right {
  display: flex;
  align-items: center;
  margin-left: auto;
}
.dots {
  margin: 0 56px 0 22px;
}

.remote {
  position: absolute;
  left: 50%;
  bottom: 2px;
  transform: translateX(-50%);
  display: flex;
  align-items: center;
  gap: 39px;
  padding: 10px 20px;
  border: 3px solid #48b0e5;
  border-bottom-width: 2px;
  border-radius: 52px;
  background: #202426;
}
.remote button {
  flex: none;
  width: 78px;
  height: 79px;
  border: 2px solid #d3e2ea;
  border-radius: 50%;
  background: none;
  color: #48a9dc;
  font-size: 25px;
}
.remote .active {
  background: #48b0e5;
  color: #fff;
  font-size: 40px;
  font-weight: 600;
  line-height: 75px;
}
.remote svg {
  width: 78px;
  height: 78px;
  margin: -2px;
  fill: none;
}
.remote .fill {
  fill: #48b0e5;
}
.remote .line {
  stroke: #48a9dc;
  stroke-width: 3;
}
.remote .thin {
  stroke: #3d9fd6;
  stroke-width: 2;
}
.remote .bar {
  stroke: #48b0e5;
  stroke-width: 4;
}
.divider {
  width: 1px;
  height: 78px;
  margin: 0 -1px;
  background: #c8c8c8;
}
</style>
